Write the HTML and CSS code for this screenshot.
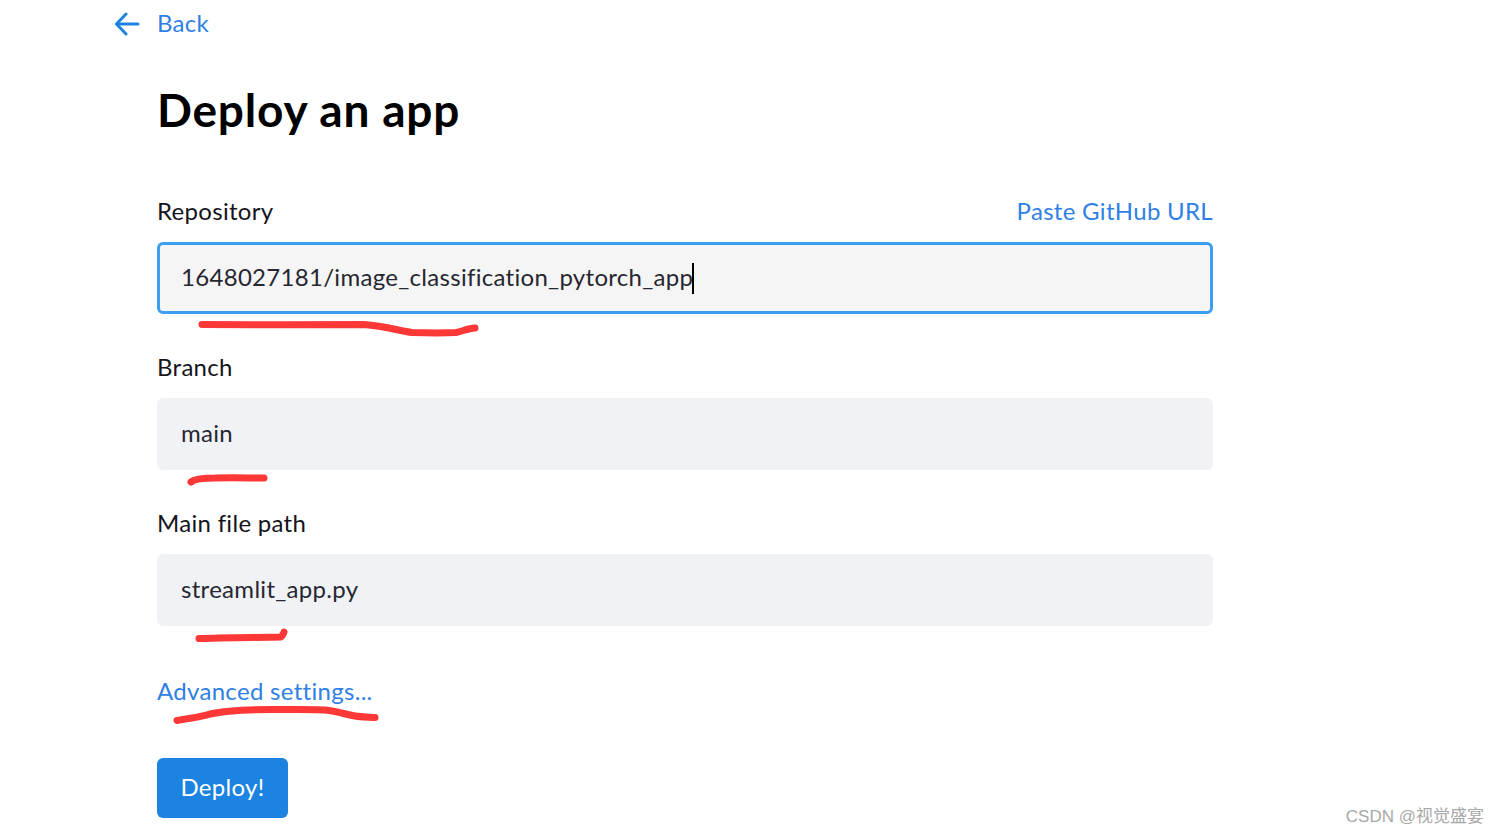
FILE: index.html
```html
<!DOCTYPE html>
<html lang="en">
<head>
    <meta charset="UTF-8">
    <meta name="viewport" content="width=device-width, initial-scale=1.0">
    <title>Deploy an app</title>
    <link rel="stylesheet" href="styles.css">
</head>
<body>
    <div class="page">
        <a class="back-link" href="#">
            <svg class="back-icon" width="26" height="24" viewBox="0 0 26 24" fill="none" stroke="#1c83e1" stroke-width="3" stroke-linecap="round" stroke-linejoin="round">
                <path d="M24 12H3"/>
                <path d="M12 2L2.5 12L12 22"/>
            </svg>
            <span class="back-text">Back</span>
        </a>

        <h1 class="title">Deploy an app</h1>

        <form class="deploy-form">
            <div class="field">
                <div class="field-label">
                    <label>Repository</label>
                    <a class="link" href="#">Paste GitHub URL</a>
                </div>
                <div class="input input-focused"><span>1648027181/image_classification_pytorch_app</span><i class="caret"></i></div>
            </div>
            <div class="field">
                <div class="field-label">
                    <label>Branch</label>
                </div>
                <div class="input"><span>main</span></div>
            </div>
            <div class="field">
                <div class="field-label">
                    <label>Main file path</label>
                </div>
                <div class="input"><span>streamlit_app.py</span></div>
            </div>
            <a class="link advanced" href="#">Advanced settings...</a>
            <button class="deploy-btn" type="button">Deploy!</button>
        </form>
    </div>

    <!-- red marker scribbles drawn over the screenshot -->
    <svg class="scribbles" width="1499" height="834" viewBox="0 0 1499 834" fill="none" stroke="#fe3737" stroke-linecap="round" stroke-linejoin="round">
        <path stroke-width="7" d="M202 324.500C250 325 320 325 364 324.500C385 326 400 331 412 332.500C430 333 445 333 456 332.500C463 331 468 328.500 475 328"/>
        <path stroke-width="7" d="M191 482C195 478.500 205 478 215 478C232 477.500 250 478 264 478"/>
        <path stroke-width="7" d="M199 638.500C220 637.500 255 637.500 281 637C283 635.500 283.500 633.500 284 632"/>
        <path stroke-width="7" d="M177 720.500C185 718.500 200 717.500 210 714C225 710.500 245 709.500 270 709.500C295 709.500 315 709 325 710C335 711 345 714 350 715C358 717 368 717 375 717.500"/>
    </svg>

    <div class="watermark">CSDN @视觉盛宴</div>
</body>
</html>
```
FILE: styles.css
```css
* {
    margin: 0;
    padding: 0;
    box-sizing: border-box;
}

body {
    font-family: Lato, "Open Sans", sans-serif;
    letter-spacing: 0.3px;
    background: #ffffff;
    color: #262730;
    height: 834px;
    overflow: hidden;
    position: relative;
}

.page {
    width: 1056px;
    margin-left: 157px;
}

.back-link {
    display: flex;
    align-items: center;
    gap: 17px;
    height: 48px;
    margin-left: -43px;
    font-size: 24px;
    color: #2f80e4;
    text-decoration: none;
}

.back-icon {
    flex-shrink: 0;
}

.back-text {
    padding-bottom: 4px;
}

.title {
    font-size: 46px;
    font-weight: 700;
    letter-spacing: 0.8px;
    line-height: 56px;
    color: #000000;
    margin-top: 34px;
    margin-bottom: 56px;
}

.field {
    margin-bottom: 36px;
}

.field-label {
    display: flex;
    justify-content: space-between;
    align-items: center;
    height: 36px;
    padding-bottom: 3px;
    margin-bottom: 12px;
    font-size: 24px;
    color: #14141c;
}

.link {
    color: #2f80e4;
    text-decoration: none;
    font-size: 24px;
}

.input {
    display: flex;
    align-items: center;
    height: 72px;
    padding: 0 24px 3px;
    background: #f0f2f6;
    border-radius: 6px;
    font-size: 24px;
    color: #262730;
}

.input-focused {
    background: #f5f5f5;
    border: 3px solid #3d9df0;
    padding: 0 21px 3px;
}

.caret {
    display: block;
    width: 2px;
    height: 31px;
    margin-top: 3px;
    margin-left: -1px;
    background: #000000;
}

.advanced {
    display: block;
    line-height: 34px;
    margin-top: 48px;
    margin-bottom: 50px;
}

.deploy-btn {
    display: block;
    width: 131px;
    height: 60px;
    padding-bottom: 3px;
    background: #1c83e1;
    border: none;
    border-radius: 6px;
    color: #ffffff;
    font-family: inherit;
    font-size: 24px;
    letter-spacing: inherit;
}

.scribbles {
    position: absolute;
    left: 0;
    top: 0;
    pointer-events: none;
}

.watermark {
    position: absolute;
    right: 15px;
    top: 805px;
    font-family: "Liberation Sans", "Noto Sans CJK SC", sans-serif;
    font-size: 17px;
    letter-spacing: 0;
    line-height: 24px;
    color: #a8a8a8;
}
```
